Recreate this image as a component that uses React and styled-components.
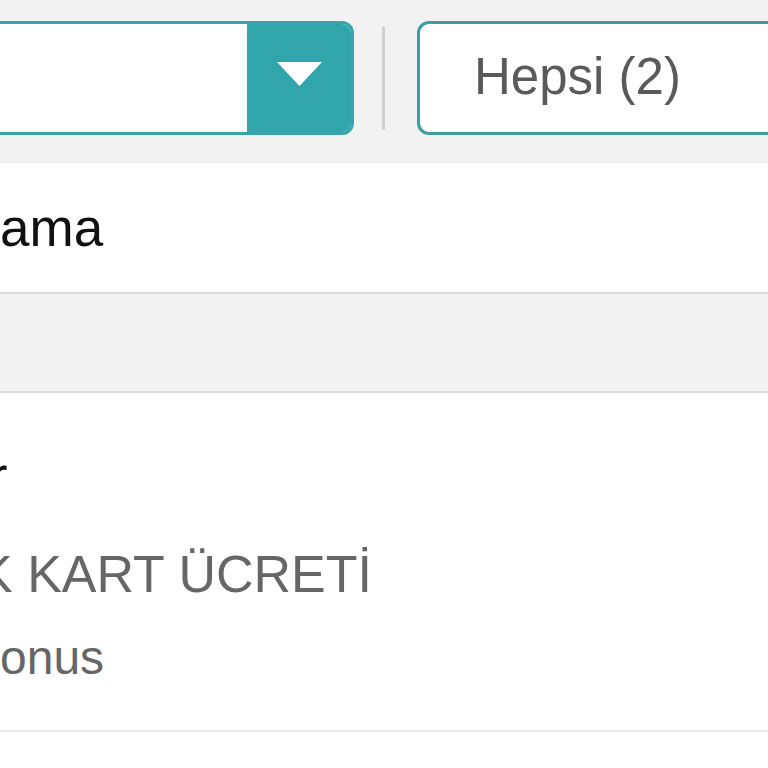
import React from "react";
import styled, { createGlobalStyle } from "styled-components";

const GlobalStyle = createGlobalStyle`
  html, body { margin: 0; padding: 0; background: #ffffff; }
  body { font-family: "Liberation Sans", Arial, Helvetica, sans-serif; }
`;

const Viewport = styled.div`
  width: 768px;
  height: 768px;
  overflow: hidden;
  background: #ffffff;
  display: flex;
  flex-direction: column;
`;

const FilterBar = styled.div`
  flex: 0 0 163px;
  background: #f2f2f2;
  display: flex;
  align-items: center;
  padding-bottom: 7px;
  box-sizing: border-box;
  border-bottom: 1px solid #ececec;
`;

const Select = styled.div`
  flex: 0 0 380px;
  margin-left: -26px;
  height: 114px;
  box-sizing: border-box;
  border: 3px solid #37a6a9;
  border-radius: 12px;
  display: flex;
  overflow: hidden;
  background: #ffffff;
`;

const SelectField = styled.div`
  flex: 1;
  background: #ffffff;
`;

const DropButton = styled.div`
  flex: 0 0 104px;
  background: #31a6aa;
  display: flex;
  align-items: center;
  justify-content: center;
  padding-bottom: 8px;
  box-sizing: border-box;
`;

const Separator = styled.div`
  flex: 0 0 3px;
  height: 104px;
  margin-left: 28px;
  background: #d0d0d0;
  border-radius: 2px;
`;

const FilterBox = styled.div`
  flex: 0 0 420px;
  margin-left: 32px;
  height: 114px;
  box-sizing: border-box;
  border: 3px solid #3e9d9e;
  border-radius: 12px;
  background: #ffffff;
  display: flex;
  align-items: center;
  padding-left: 54px;
  padding-bottom: 2px;
  font-size: 51px;
  color: #5a5a5a;
`;

const SortRow = styled.div`
  flex: 0 0 131px;
  box-sizing: border-box;
  padding-top: 35px;
  border-bottom: 2px solid #dadada;
  background: #ffffff;
`;

const SectionGap = styled.div`
  flex: 0 0 99px;
  box-sizing: border-box;
  background: #f3f3f3;
  border-bottom: 2px solid #dadada;
`;

const Item = styled.div`
  flex: 0 0 339px;
  box-sizing: border-box;
  padding-top: 52px;
  border-bottom: 2px solid #e8e8e8;
  display: flex;
  flex-direction: column;
  background: #ffffff;
`;

const Text = styled.div`
  white-space: nowrap;
  font-size: ${(p) => p.$size}px;
  line-height: ${(p) => p.$lh}px;
  color: ${(p) => p.$color};
  margin-left: ${(p) => p.$shift || 0}px;
  margin-top: ${(p) => p.$top || 0}px;
`;

const Triangle = () => (
  <svg width="45" height="24" viewBox="0 0 45 24">
    <polygon points="0,0 45,0 22.5,24" fill="#ffffff" />
  </svg>
);

export default function App() {
  return (
    <>
      <GlobalStyle />
      <Viewport>
        <FilterBar>
          <Select>
            <SelectField />
            <DropButton>
              <Triangle />
            </DropButton>
          </Select>
          <Separator />
          <FilterBox>Hepsi (2)</FilterBox>
        </FilterBar>
        <SortRow>
          <Text $size={53} $lh={60} $color="#111111">ama</Text>
        </SortRow>
        <SectionGap />
        <Item>
          <Text $size={54} $lh={60} $color="#111111" $shift={-10.5}>r</Text>
          <Text $size={52} $lh={60} $color="#666666" $shift={-22} $top={39}>K KART ÜCRETİ</Text>
          <Text $size={48} $lh={54} $color="#666666" $top={27}>onus</Text>
        </Item>
      </Viewport>
    </>
  );
}
